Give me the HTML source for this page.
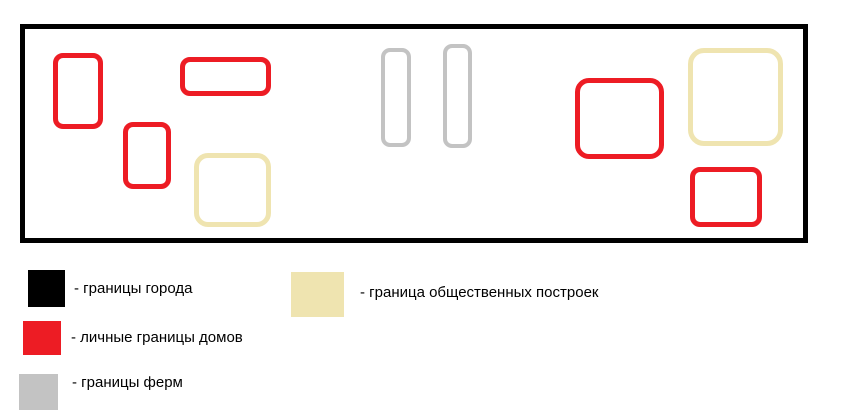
<!DOCTYPE html>
<html><head><meta charset="utf-8"><style>
body{margin:0;width:849px;height:411px;background:#fff;position:relative;overflow:hidden;font-family:"Liberation Sans","DejaVu Sans",sans-serif;}
.b{position:absolute;box-sizing:border-box;}
.r{border:5px solid #ed1c24;border-radius:10px}
.g{border:4px solid #c3c3c3;border-radius:9px}
.y{border:5px solid #efe4b0;border-radius:14px}
.t{position:absolute;font-size:15px;color:#000;white-space:nowrap;line-height:17px}
</style></head><body>
<div class="b" style="left:20px;top:24px;width:788px;height:219px;border:5px solid #000"></div>
<div class="b r" style="left:53px;top:53px;width:50px;height:76px"></div>
<div class="b r" style="left:180px;top:57px;width:91px;height:39px"></div>
<div class="b r" style="left:123px;top:122px;width:48px;height:67px"></div>
<div class="b y" style="left:194px;top:153px;width:77px;height:74px"></div>
<div class="b g" style="left:381px;top:48px;width:30px;height:99px"></div>
<div class="b g" style="left:443px;top:44px;width:29px;height:104px"></div>
<div class="b r" style="left:575px;top:78px;width:89px;height:81px;border-radius:14px"></div>
<div class="b y" style="left:688px;top:48px;width:95px;height:98px;border-radius:16px"></div>
<div class="b r" style="left:690px;top:167px;width:72px;height:60px"></div>
<div class="b" style="left:28px;top:270px;width:37px;height:37px;background:#000"></div>
<div class="b" style="left:23px;top:321px;width:38px;height:34px;background:#ed1c24"></div>
<div class="b" style="left:19px;top:374px;width:39px;height:36px;background:#c3c3c3"></div>
<div class="b" style="left:291px;top:272px;width:53px;height:45px;background:#efe4b0"></div>
<div class="t" style="left:74px;top:280px">- границы города</div>
<div class="t" style="left:71px;top:329px">- личные границы домов</div>
<div class="t" style="left:72px;top:374px">- границы ферм</div>
<div class="t" style="left:360px;top:284px">- граница общественных построек</div>
</body></html>
